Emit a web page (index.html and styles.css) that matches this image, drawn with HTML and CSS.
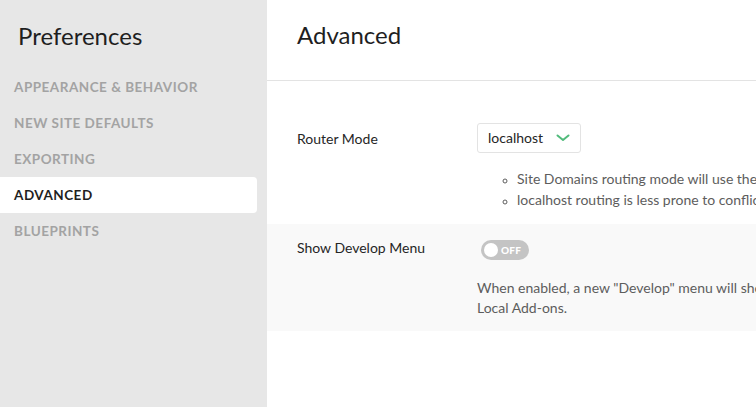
FILE: index.html
```html
<!DOCTYPE html>
<html lang="en">
<head>
 <meta charset="UTF-8">
 <meta name="viewport" content="width=device-width, initial-scale=1.0">
 <title>Preferences</title>
 <link rel="stylesheet" href="styles.css">
</head>
<body>
 <div class="app">
 <aside class="sidebar">
 <h1>Preferences</h1>
 <nav class="nav">
 <a class="nav-item">Appearance &amp; Behavior</a>
 <a class="nav-item">New Site Defaults</a>
 <a class="nav-item">Exporting</a>
 <a class="nav-item active">Advanced</a>
 <a class="nav-item">Blueprints</a>
 </nav>
 </aside>
 <main class="main">
 <header class="header">
 <h2>Advanced</h2>
 </header>
 <section class="row">
 <div class="label">Router Mode</div>
 <div class="control">
 <div class="select">
 <span>localhost</span>
 <svg width="14" height="8" viewBox="0 0 14 8"><path d="M1.5 1.5 L7 6 L12.5 1.5" fill="none" stroke="#51bb7b" stroke-width="2" stroke-linecap="round" stroke-linejoin="round"/></svg>
 </div>
 <ul class="notes">
 <li>Site Domains routing mode will use the site's domain to route requests.</li>
 <li>localhost routing is less prone to conflicts with other software.</li>
 </ul>
 </div>
 </section>
 <section class="row alt">
 <div class="label">Show Develop Menu</div>
 <div class="control">
 <div class="toggle">
 <span class="knob"></span>
 <span class="toggle-text">OFF</span>
 </div>
 <p class="desc">When enabled, a new "Develop" menu will show in the menu bar with tools for developing<br>Local Add-ons.</p>
 </div>
 </section>
 </main>
 </div>
</body>
</html>
```

FILE: styles.css
```css
* {
margin: 0;
padding: 0;
box-sizing: border-box;
}

body {
font-family: Lato, 'Noto Sans', sans-serif;
color: #262626;
background: #ffffff;
overflow: hidden;
}

.app {
display: flex;
width: 756px;
height: 407px;
}

.sidebar {
width: 267px;
flex-shrink: 0;
background: #e7e7e7;
padding-top: 20px;
}

.sidebar h1 {
font-size: 24px;
font-weight: 400;
color: #1f1f1f;
padding-left: 18px;
line-height: 32px;
margin-bottom: 17px;
}

.nav {
display: flex;
flex-direction: column;
padding-right: 10px;
}

.nav-item {
display: block;
height: 36px;
line-height: 36px;
padding-left: 14px;
font-size: 13.5px;
font-weight: 700;
text-transform: uppercase;
letter-spacing: 0.5px;
color: #a3a3a3;
border-radius: 0 4px 4px 0;
}

.nav-item.active {
background: #ffffff;
color: #1f1f1f;
}

.main {
flex: 1;
min-width: 0;
overflow: hidden;
}

.header {
height: 81px;
border-bottom: 1px solid #e3e3e3;
padding-left: 30px;
padding-top: 19px;
}

.header h2 {
font-size: 24px;
font-weight: 400;
line-height: 32px;
color: #1f1f1f;
}

.row {
display: flex;
padding: 48px 0 10px 30px;
}

.row.alt {
background: #f9f9f9;
margin-top: 4px;
padding: 14px 0 13px 30px;
}

.label {
width: 180px;
flex-shrink: 0;
font-size: 14px;
line-height: 20px;
color: #262626;
}

.control {
white-space: nowrap;
font-size: 14px;
}

.select {
display: inline-flex;
align-items: center;
gap: 13px;
height: 30px;
padding: 0 10px 0 10px;
border: 1px solid #e3e3e3;
border-radius: 3px;
background: #ffffff;
font-size: 14px;
color: #262626;
margin-top: -9px;
}

.notes {
margin-top: 15px;
padding-left: 40px;
list-style: circle;
color: #5d5d5d;
line-height: 21px;
}

.notes li::marker {
font-size: 11px;
}

.toggle {
display: inline-flex;
align-items: center;
width: 48px;
height: 20px;
margin-left: 4px;
margin-top: 2px;
border-radius: 10px;
background: #c4c4c4;
padding: 0 3px;
gap: 3px;
}

.knob {
width: 14px;
height: 14px;
border-radius: 50%;
background: #ffffff;
}

.toggle-text {
font-size: 10px;
font-weight: 900;
color: #ffffff;
letter-spacing: 0.2px;
}

.desc {
margin-top: 18px;
color: #5d5d5d;
line-height: 20px;
}
```
